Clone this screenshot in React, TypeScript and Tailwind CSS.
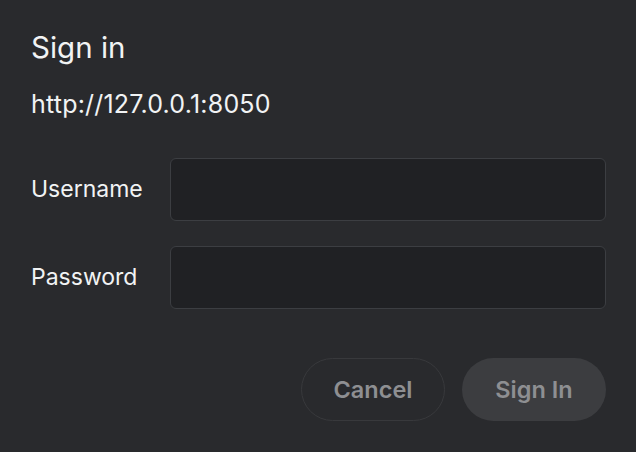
const fields = ["Username", "Password"];

export default function App() {
  return (
    <div
      className="h-[452px] w-[636px] bg-[#292a2d] pl-[31px] pr-[30px] pt-[31px] text-[#f1f3f4]"
      style={{ fontFamily: "Inter, 'Noto Sans', sans-serif" }}
    >
      <h1 className="h-8 text-[29.5px] leading-8 font-normal">Sign in</h1>
      <p className="mt-[27px] h-7 text-[25px] leading-7 tracking-[0.2px]">http://127.0.0.1:8050</p>

      <div className="mt-[40px] space-y-[25px]">
        {fields.map((label) => (
          <div key={label} className="flex items-center">
            <label className="w-[139px] text-[23px]">{label}</label>
            <input
              type={label === "Password" ? "password" : "text"}
              className="h-[63px] flex-1 rounded-md border border-[#3c3e42] bg-[#202124] px-3 text-[20px] text-[#e8eaed] outline-none"
            />
          </div>
        ))}
      </div>

      <div className="mt-[49px] flex justify-end gap-[17px]">
        <button className="h-[63px] w-[144px] rounded-full border border-[#38393c] text-[23.5px] font-semibold text-[#8e8f92]">
          Cancel
        </button>
        <button className="h-[63px] w-[144px] rounded-full bg-[#3c3d40] text-[23.5px] font-semibold text-[#8e8f92]">
          Sign In
        </button>
      </div>
    </div>
  );
}
